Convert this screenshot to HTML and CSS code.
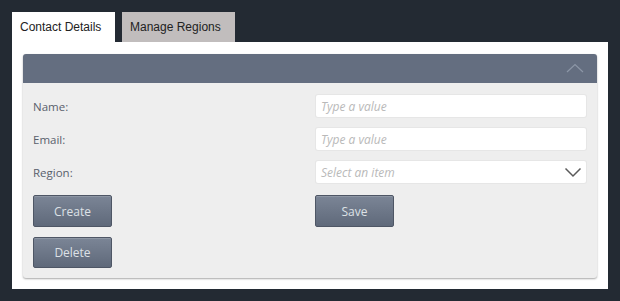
FILE: index.html
```html
<!DOCTYPE html>
<html>
<head>
<meta charset="utf-8">
<link rel="stylesheet" href="styles.css">
</head>
<body>
<div class="app">
  <div class="tabs">
    <div class="tab active">Contact Details</div>
    <div class="tab">Manage Regions</div>
  </div>
  <div class="panel">
    <div class="card">
      <div class="card-header">
        <svg class="collapse" width="18" height="10" viewBox="0 0 18 10"><polyline points="1,9 9,1.5 17,9" fill="none" stroke="#8c96a6" stroke-width="1.2"/></svg>
      </div>
      <div class="card-body">
        <div class="form">
          <label class="label">Name:</label>
          <div class="field"><span class="placeholder">Type a value</span></div>
          <label class="label">Email:</label>
          <div class="field"><span class="placeholder">Type a value</span></div>
          <label class="label">Region:</label>
          <div class="field select"><span class="placeholder">Select an item</span>
            <svg class="arrow" width="18" height="11" viewBox="0 0 18 11"><polyline points="1.5,1.5 9,9 16.5,1.5" fill="none" stroke="#5a5a5a" stroke-width="1.5"/></svg>
          </div>
          <div class="btn-col">
            <button class="btn">Create</button>
            <button class="btn">Delete</button>
          </div>
          <div class="btn-col right">
            <button class="btn">Save</button>
          </div>
        </div>
      </div>
    </div>
  </div>
</div>
</body>
</html>
```

FILE: styles.css
```css
html, body {
  margin: 0;
  padding: 0;
  background: #232a33;
  width: 620px;
  height: 301px;
  overflow: hidden;
}
.app {
  padding: 12px 0 0 12px;
}
.tabs {
  display: flex;
  gap: 7px;
  height: 30px;
}
.tab {
  font-family: "Liberation Sans", Arial, sans-serif;
  font-size: 12px;
  color: #222;
  background: #c1bdbd;
  padding: 0 0 0 8px;
  line-height: 30px;
  box-sizing: border-box;
  width: 113px;
  text-align: left;
}
.tab.active {
  background: #fff;
  width: 103px;
}
.panel {
  background: #fff;
  width: 596px;
  height: 247px;
  box-sizing: border-box;
  padding: 12px 11px 0 11px;
}
.card {
  background: #eeeeee;
  border-radius: 3px;
  box-shadow: 0 1px 2px rgba(0,0,0,0.35);
  overflow: hidden;
  height: 224px;
}
.card-header {
  height: 29px;
  background: #646e80;
  display: flex;
  justify-content: flex-end;
  align-items: center;
  padding-right: 13px;
}
.collapse {
  display: block;
  margin-top: -1px;
}
.card-body {
  padding: 12px 11px 10px 10px;
}
.form {
  display: grid;
  grid-template-columns: 283px 270px;
  row-gap: 11px;
  align-items: center;
}
.label {
  font-family: "Open Sans", "Noto Sans", sans-serif;
  font-size: 11.5px;
  color: #59606c;
}
.field {
  height: 22px;
  background: #fff;
  border-radius: 2px;
  box-shadow: 0 0 0 1px #e6e6e6;
  display: flex;
  align-items: center;
  padding-left: 5px;
  box-sizing: border-box;
  position: relative;
}
.placeholder {
  font-family: "Open Sans", "Noto Sans", sans-serif;
  font-style: italic;
  font-size: 12px;
  color: #b9b9b9;
}
.select .arrow {
  position: absolute;
  right: 4px;
  top: 6px;
}
.btn-col {
  display: flex;
  flex-direction: column;
  gap: 10px;
  align-self: start;
  margin-top: 1px;
}
.btn-col.right {
  margin-left: -1px;
}
.btn {
  width: 79px;
  height: 32px;
  border: 1px solid #4e5665;
  border-radius: 2px;
  background: linear-gradient(#7b8596, #5f697a);
  color: #dde1e6;
  font-family: "Open Sans", "Noto Sans", sans-serif;
  font-size: 12px;
  padding: 0;
  box-shadow: inset 0 1px 0 rgba(255,255,255,0.15);
}
.btn + .btn {
  height: 31px;
}
```
